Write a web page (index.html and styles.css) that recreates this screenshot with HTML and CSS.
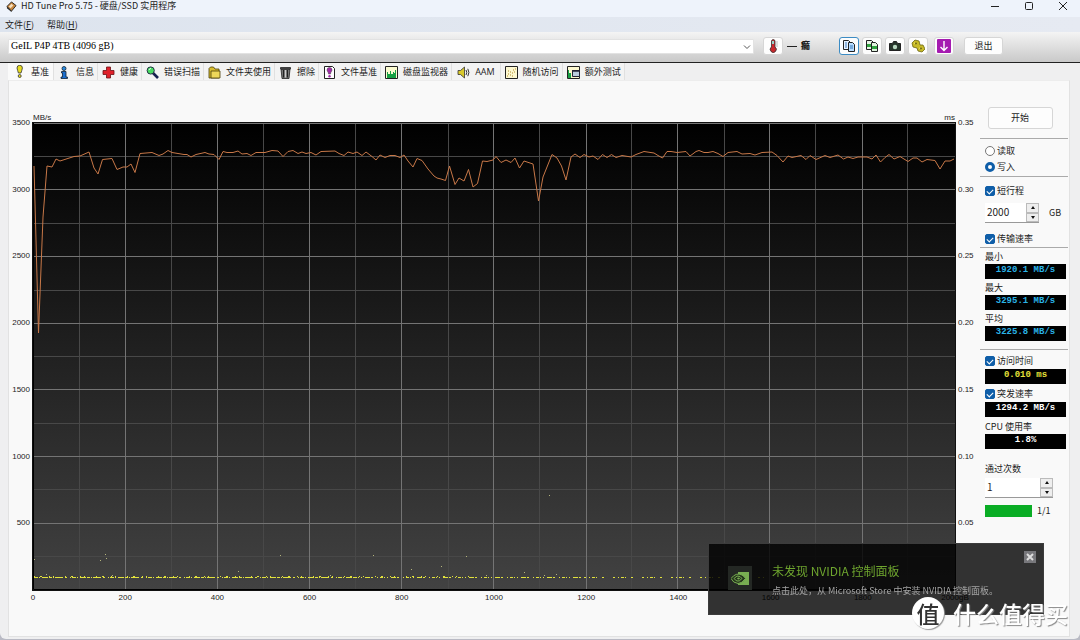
FILE: index.html
```html
<!DOCTYPE html>
<html lang="zh-CN">
<head>
<meta charset="utf-8">
<title>HD Tune Pro 5.75</title>
<link rel="stylesheet" href="styles.css">
</head>
<body>
<div class="window">
  <header class="titlebar">
    <svg class="app-icon" viewBox="0 0 12 12"><path d="M1 6 6 1l5 4-5 6z" fill="#c8863c" stroke="#222"/><path d="m3 6 3-3 2 2-3 3z" fill="#f4dfc0"/><path d="m1 6 5 5v1L1 8z" fill="#222"/></svg>
    <h1>HD Tune Pro 5.75 - 硬盘/SSD 实用程序</h1>
    <div class="window-controls">
      <button type="button" aria-label="最小化"><svg viewBox="0 0 10 10"><path d="M1 5.5h8"/></svg></button>
      <button type="button" aria-label="最大化"><svg viewBox="0 0 10 10"><rect x="1.5" y="1.5" width="7" height="7" rx="1"/></svg></button>
      <button type="button" aria-label="关闭"><svg viewBox="0 0 10 10"><path d="m1 1 8 8M9 1 1 9"/></svg></button>
    </div>
  </header>

  <nav class="menubar">
    <button type="button">文件(<u>F</u>)</button>
    <button type="button">帮助(<u>H</u>)</button>
  </nav>

  <div class="toolbar">
    <div class="drive">
      <select aria-label="硬盘"><option>GeIL P4P 4TB (4096 gB)</option></select>
      <svg viewBox="0 0 8 8"><path d="m1 2.500 3 3 3-3" fill="none" stroke="#555"/></svg>
    </div>
    <div class="temperature">
      <button type="button" class="tool" aria-label="温度"><svg viewBox="0 0 14 14"><path d="M5.500 2a1.800 1.800 0 0 1 3.500 0v6a3 3 0 1 1-3.500 0z" fill="#c9282d" stroke="#333" stroke-width=".8"/><path d="M6 2h2v3H6z" fill="#9bd2c8"/><path d="M10 3h2M10 5h2M10 7h2" stroke="#999" stroke-width=".6"/></svg></button>
      <span class="dash"></span><b>癤</b>
    </div>
    <div class="actions">
      <button type="button" class="tool focused" aria-label="复制文本"><svg viewBox="0 0 14 14"><path d="M1.500 1.500h5l2 2v7h-7z" fill="#e8f2ff" stroke="#222"/><path d="M6.500 3.500h4l2 2v7h-6z" fill="#b7dcff" stroke="#222"/><path d="M3 4h2M3 6h2M3 8h2M8 7h3M8 9h3" stroke="#3b78b8"/></svg></button>
      <button type="button" class="tool" aria-label="复制截图"><svg viewBox="0 0 14 14"><path d="M1.500 1.500h5l2 2v7h-7z" fill="#e9f4e6" stroke="#222"/><path d="M6.500 3.500h4l2 2v7h-6z" fill="#dff2dd" stroke="#222"/><path d="M2 5h4v3H2zM7 7h5v3H7z" fill="#31a33f"/></svg></button>
      <button type="button" class="tool" aria-label="保存截图"><svg viewBox="0 0 14 14"><path d="M1.500 4.500h3l1-2h3l1 2h3v7h-11z" fill="#26352b" stroke="#222"/><circle cx="7" cy="8" r="2.200" fill="#b8d8c0"/></svg></button>
      <button type="button" class="tool" aria-label="选项"><svg viewBox="0 0 14 14"><path d="m1 4 3-3 4 1 1 4 3 0 2 4-3 3-4-1-1-3-4-1z" fill="#c8bb28" stroke="#6b6410" stroke-width=".8"/><path d="m3 4 3 1M8 9l3 1" stroke="#f0e870"/><circle cx="5" cy="4.500" r="1" fill="#6b6410"/><circle cx="10" cy="9.500" r="1" fill="#6b6410"/></svg></button>
      <button type="button" class="tool save" aria-label="保存"><svg viewBox="0 0 14 14"><rect width="14" height="14" rx="1" fill="#a51bb0"/><path d="M7 2v9M3.500 8 7 11.500 10.500 8" fill="none" stroke="#fff" stroke-width="1.400"/></svg></button>
      <button type="button" class="exit">退出</button>
    </div>
  </div>

  <nav class="tabs">
    <button type="button" class="tab active"><svg viewBox="0 0 13 13"><path d="M4 3a2.700 2.700 0 0 1 5.400 0c0 2-1.200 3-1.400 5H5.400C5.200 6 4 5 4 3z" fill="#e8dc20" stroke="#333" stroke-width=".8"/><circle cx="6.700" cy="11" r="1.500" fill="#e8dc20" stroke="#333" stroke-width=".8"/></svg>基准</button>
    <button type="button" class="tab"><svg viewBox="0 0 13 13"><circle cx="6" cy="2.500" r="2" fill="#2a8be0" stroke="#123" stroke-width=".8"/><path d="M3.500 5.500h4.500V11h1.500v1.500H3V11h1.500V7h-1z" fill="#1c6fd0" stroke="#123" stroke-width=".8"/></svg>信息</button>
    <button type="button" class="tab"><svg viewBox="0 0 13 13"><path d="M4.500 1h4v3.500H12v4H8.500V12h-4V8.500H1v-4h3.500z" fill="#e0202a" stroke="#6a1014" stroke-width=".8"/></svg>健康</button>
    <button type="button" class="tab"><svg viewBox="0 0 13 13"><path d="m7 7 5 5" stroke="#14204f" stroke-width="2.600"/><circle cx="4.700" cy="4.500" r="3.600" fill="#48dc62" stroke="#234"/><path d="M3 4a2 2 0 0 1 2-1.500" stroke="#dfe" fill="none"/></svg>错误扫描</button>
    <button type="button" class="tab"><svg viewBox="0 0 13 13"><path d="M1 2.500 2.500 1h3L7 3h4v9H1z" fill="#d8bd30" stroke="#4a3d08" stroke-width=".8"/><path d="M3 5h9v7H3z" fill="#edd75a" stroke="#4a3d08" stroke-width=".8"/></svg>文件夹使用</button>
    <button type="button" class="tab"><svg viewBox="0 0 13 13"><path d="M2 3h9l-1 9.500H3zM1.500 1.500h10V3h-10z" fill="#777" stroke="#222" stroke-width=".8"/><path d="M4.500 4v7.500M8.500 4v7.500" stroke="#222"/><path d="M6.500 4v7.500" stroke="#ccc"/></svg>擦除</button>
    <button type="button" class="tab"><svg viewBox="0 0 13 13"><path d="M1.500.5h8l2 2v10h-10z" fill="#fff" stroke="#222"/><path d="M4 4a2.500 2.500 0 0 1 5 0c0 1.500-1.500 2-1.500 4h-2c0-2-1.500-2.500-1.500-4z" fill="#a02aa8" stroke="#444" stroke-width=".5"/><circle cx="6.500" cy="10.200" r="1.200" fill="#a02aa8"/></svg>文件基准</button>
    <button type="button" class="tab"><svg viewBox="0 0 13 13"><path d="M.5.5h12v12H.5z" fill="#fbfbd0" stroke="#222"/><path d="M2 12V6h1v2h2V5h1v3h2V6h1v1h1V4h1v8z" fill="#17a044"/></svg>磁盘监视器</button>
    <button type="button" class="tab sound"><svg viewBox="0 0 13 13"><path d="M1 4.500h2.500L7.500 1v11l-4-3.500H1z" fill="#d9c92c" stroke="#333" stroke-width=".8"/><path d="M9 4q1.500 2.500 0 5M10.800 2.800q2.200 3.700 0 7.400" fill="none" stroke="#333"/></svg>AAM</button>
    <button type="button" class="tab"><svg viewBox="0 0 13 13"><path d="M.5.5h12v12H.5z" fill="#fdf8d0" stroke="#222"/><path d="M2 10h1M3 8h1M5 9h1M5 6h1M7 7h1M8 4h1M9 6h1M10 3h1M7 10h1M3 5h1" stroke="#b08a28"/></svg>随机访问</button>
    <button type="button" class="tab"><svg viewBox="0 0 13 13"><path d="M.5.5h12v12H.5z" fill="#fdf8d0" stroke="#222"/><path d="M1 12V4h1v3h2v5z" fill="#17a044"/><path d="M5.500 4.500h7v6h-7z" fill="#bcd" stroke="#223"/><path d="M5 5h8" stroke="#223" stroke-width="1.500"/></svg>额外测试</button>
  </nav>

  <main class="panel">
    <section class="chart">
      <div class="units"><span>MB/s</span><span>ms</span></div>
      <div class="axis-left"><span>3500</span><span>3000</span><span>2500</span><span>2000</span><span>1500</span><span>1000</span><span>500</span></div>
      <svg class="plot" viewBox="33 123 922 467" preserveAspectRatio="none">
        <defs>
          <linearGradient id="shade" x1="0" y1="0" x2="0" y2="1"><stop offset="0" stop-color="#000"/><stop offset="1" stop-color="#424242"/></linearGradient>
        </defs>
        <rect x="33" y="123" width="922" height="467" fill="url(#shade)"/>
        <path class="grid minor" d="M79.500 123v467M171.500 123v467M263.500 123v467M355.500 123v467M448.500 123v467M539.500 123v467M631.500 123v467M724.500 123v467M815.500 123v467M907.500 123v467M33 156.500h922M33 223.500h922M33 290.500h922M33 356.500h922M33 423.500h922M33 489.500h922M33 556.500h922"/>
        <path class="grid major" d="M125.500 123v467M217.500 123v467M309.500 123v467M401.500 123v467M493.500 123v467M586.500 123v467M677.500 123v467M769.500 123v467M862.500 123v467M33 123.500h922M33 189.500h922M33 256.500h922M33 323.500h922M33 389.500h922M33 456.500h922M33 523.500h922"/>
        <path class="frame" d="M33.500 123v466.500h921"/>
        <path class="access a" d="M34 577.500h320"/>
        <path class="access b" d="M34 576.500h440"/>
        <path class="access c" d="M354 577.500h230"/>
        <path class="access d" d="M584 577.500h180"/>
        <path class="outliers" d="M34 559.500h1M46 574.500h1M100 560.500h1M105 554.500h1M106 558.500h1M112 575.500h1M238 571.500h1M280 555.500h1M330 575.500h1M373 555.500h1M411 569.500h1M441 566.500h1M466 556.500h1M486 575.500h1M524 572.500h1M549 495.500h1M544 575.500h1M556 574.500h1"/>
        <polyline class="transfer" points="34,166 36,240 38.500,333 43,217 47,166 52,167 56,159 60,161 74,156.500 80,156 89,152 94,168 98,174 102.500,159.500 112,158.500 117,169.500 123,167 127,167 131,164 135,172.500 140,153.500 146,153 152,152.500 159,155.500 163,154 168,150.500 172,152.500 184,154.500 187,154.500 191,157 196,154.500 205,152.500 209,154 214,154.500 219,159.500 223,151.500 227,152.500 233,152.500 238,151 242,154 247,153.500 251,155.500 256,152.500 265,152.500 272,150.500 278,151 283,156.500 288,151.500 293,150.500 298,153.500 302,152 306,153.500 311,152.500 316,155 321,151.500 335,151 339,153.500 344,155.500 348,152 353,153.500 357,152 362,155.500 366,152 372,156.500 376,160 380,155 385,157.500 390,155.500 395,155.500 400,157.500 404,155 408,161 413,167 417,158.500 422,160.500 428,169 434,176 437,178 441,179 445.500,180.500 449.500,166 455,184.500 459,178 464,181 468.500,169.500 473,187 477.500,183.500 482.500,161 487,161.500 493,160 496,156.500 501,162.500 506,160 511,162.500 515,158 519.500,168 524,161 533,164 538.500,201 543,177 549,162 552,154.500 557,158 561.500,166 566,180 571,157 575,154 580,157.500 584,154.500 589,157 593,156 598,159.500 602.500,154.500 607,157.500 611.500,154.500 616,157.500 622,155.500 631,157 636,154.500 644,151.500 654,153 658,155.500 662.500,158 667,151.500 671,151.500 677,152.500 686,151.500 690,156 696,151.500 699,150.500 704,152.500 708,152.500 713,151.500 718,153.500 723,156.500 728,152.500 737,151.500 742,154 750,153.500 755,155 762,152.500 772,152 777,155.500 783,162 788,156 792,157.500 801,155.500 806,159.500 810,155.500 816,159.500 825,155.500 830,157.500 838,155 843.500,159 848,157 853,158.500 858,157 867,157 872,159 876,155 880.500,162 885,157.500 889,154.500 894,159 900,156.500 908,161.500 913,158 917,158 922,162 927,159.500 935,160.500 940,169 945,161 950,161 954,159"/>
      </svg>
      <div class="axis-right"><span>0.35</span><span>0.30</span><span>0.25</span><span>0.20</span><span>0.15</span><span>0.10</span><span>0.05</span></div>
      <div class="axis-bottom"><span>0</span><span>200</span><span>400</span><span>600</span><span>800</span><span>1000</span><span>1200</span><span>1400</span><span>1600</span><span>1800</span><span>2000gB</span></div>
    </section>

    <aside class="side">
      <button type="button" class="start">开始</button>
      <div class="modes">
        <label class="option"><input type="radio" name="mode">读取</label>
        <label class="option"><input type="radio" name="mode" checked>写入</label>
      </div>
      <label class="option stroke"><input type="checkbox" checked>短行程</label>
      <div class="spin-row">
        <div class="spin"><input type="text" value="2000" aria-label="短行程容量"><span class="arrows"><button type="button" aria-label="增加"></button><button type="button" aria-label="减少"></button></span></div>
        <span>GB</span>
      </div>
      <label class="option rate"><input type="checkbox" checked>传输速率</label>
      <div class="readings">
        <span class="caption">最小</span><output class="lcd">1920.1 MB/s</output>
        <span class="caption">最大</span><output class="lcd">3295.1 MB/s</output>
        <span class="caption">平均</span><output class="lcd">3225.8 MB/s</output>
      </div>
      <div class="extra">
        <label class="option"><input type="checkbox" checked>访问时间</label><output class="lcd yellow">0.010 ms</output>
        <label class="option"><input type="checkbox" checked>突发速率</label><output class="lcd white">1294.2 MB/s</output>
        <span class="caption">CPU 使用率</span><output class="lcd white">1.8%</output>
      </div>
      <label class="caption passes" for="passes">通过次数</label>
      <div class="spin wide"><input type="text" id="passes" value="1"><span class="arrows"><button type="button" aria-label="增加次数"></button><button type="button" aria-label="减少次数"></button></span></div>
      <div class="progress"><span class="bar"></span><span>1/1</span></div>
    </aside>
  </main>
</div>

<div class="toast" role="status">
  <span class="nvidia"><svg viewBox="0 0 18 13"><path d="M7 0h11v13H7z" fill="#78ad52"/><path d="M0 6.500Q5 0 11 3q3 2 3.500 3.500Q11 11.500 7 11.500 2 11 0 6.500z" fill="#25351c" stroke="#78ad52"/><path d="M3 6.500Q6 2.500 9 4.500l2 2Q8 10 6 9 4 8 3 6.500z" fill="none" stroke="#78ad52"/><path d="M6 6.500q1.500-2 3 0-1.500 2-3 0z" fill="#78ad52"/></svg></span>
  <div class="message">
    <strong>未发现 NVIDIA 控制面板</strong>
    <p>点击此处，从 Microsoft Store 中安装 NVIDIA 控制面板。</p>
  </div>
  <button type="button" class="dismiss" aria-label="关闭通知"><svg viewBox="0 0 8 8"><path d="m1 1 6 6M7 1 1 7" stroke="#ddd" stroke-width="2"/></svg></button>
</div>

<div class="watermark"><span class="seal">值</span><span>什么值得买</span></div>
</body>
</html>
```

FILE: styles.css
```css
* { box-sizing: border-box; }

body {
  margin: 0;
  background: #b9bac4;
  color: #1c1c1c;
  font: 9px/14px "Noto Sans CJK SC", "Noto Sans", sans-serif;
}

button, input, select { font: inherit; color: inherit; margin: 0; }
button { padding: 0; border: 0; background: none; }
svg { display: block; }

.window {
  display: flex;
  flex-direction: column;
  min-height: calc(100vh - 2px);
  background: #efeff0;
  border-radius: 0 0 6px 6px;
  padding-bottom: 2px;
}

.titlebar {
  display: flex;
  align-items: center;
  height: 17px;
  padding: 0 12px 5px 6px;
  background: #eef3fb;
}
.titlebar h1 { flex: 1; margin: 0 0 0 4px; font-size: 9px; font-weight: 400; }
.app-icon { width: 11px; height: 11px; }
.window-controls { display: flex; gap: 24px; }
.window-controls svg { width: 10px; height: 10px; fill: none; stroke: #222; }

.menubar {
  display: flex;
  gap: 13px;
  height: 15px;
  padding: 0 5px;
  background: linear-gradient(90deg, #dde4ee, #e6eaf2);
}

.toolbar {
  display: flex;
  align-items: center;
  height: 31px;
  padding: 0 77px 2px 8px;
  background: linear-gradient(#f4f4f4, #c9c9c9);
  border-bottom: 1px solid #222;
}
.drive { position: relative; flex: 1; margin-right: 9px; }
.drive select {
  display: block;
  width: 100%;
  height: 15px;
  padding: 0 2px;
  border: 1px solid #e2e2e2;
  border-radius: 1px;
  background: #fff;
  color: #000;
  font-family: "Liberation Serif", serif;
  font-size: 10px;
  line-height: 12px;
  appearance: none;
}
.drive svg { position: absolute; right: 3px; top: 4px; width: 8px; height: 8px; pointer-events: none; }

.tool, .exit, .start {
  background: #fdfdfd;
  border: 1px solid #d6d6d6;
  border-radius: 3px;
}
.tool { display: grid; place-items: center; width: 20px; height: 18px; }
.tool svg { width: 14px; height: 14px; }
.tool.focused { border-color: #3c8cc4; }
.tool.save { margin: 0 7px 0 3px; }
.exit { width: 39px; height: 18px; }
.temperature { display: flex; align-items: center; gap: 4px; margin-right: 29px; }
.temperature b { font-weight: 900; }
.dash { width: 10px; height: 1px; background: #222; }
.actions { display: flex; gap: 3px; }

.tabs { display: flex; height: 17px; padding-left: 8px; }
.tab {
  display: flex;
  align-items: center;
  gap: 5px;
  padding: 1px 3px 0 4px;
  border: solid #e0e0e0;
  border-width: 0 1px 0 0;
  background: #f3f3f3;
}
.tab svg { width: 13px; height: 13px; }
.tab.active { background: #fafafa; padding: 0 4px 0 5px; }
.tab.sound { font-family: "Open Sans", "Noto Sans", sans-serif; padding: 1px 5px 0; }

.panel {
  flex: 1;
  display: flex;
  margin: 0 10px 0 8px;
  background: #f9f9f9;
  border: 1px solid #e2e2e2;
  border-top-color: #ededed;
}

.chart {
  flex: 1;
  display: grid;
  grid-template-columns: 24px 1fr 25px;
  grid-template-rows: 42px 1fr 46px;
  font: 8px/14px "Liberation Sans", sans-serif;
  min-width: 0;
}
.units {
  grid-column: 2;
  display: flex;
  justify-content: space-between;
  align-items: flex-end;
  line-height: 10px;
}
.axis-left, .axis-right {
  grid-row: 2;
  display: grid;
  grid-template-rows: repeat(7, 1fr);
  margin: -7px 3px 7px;
}
.axis-left { grid-column: 1; text-align: right; }
.axis-right { grid-column: 3; }
.axis-bottom {
  grid-row: 3;
  grid-column: 2;
  display: grid;
  grid-template-columns: repeat(11, 1fr);
  margin: 1px -5%;
  text-align: center;
}
.plot {
  grid-row: 2;
  grid-column: 2;
  width: 100%;
  height: 100%;
  min-height: 0;
  outline: 1px solid #111;
}
.grid { fill: none; }
.minor { stroke: #484848; }
.major { stroke: #747474; }
.frame { fill: none; stroke: #000; }
.transfer { fill: none; stroke: #c87848; }
.access, .outliers { fill: none; stroke: #e2e23c; }
.outliers { stroke: #b4b47c; }
.a { stroke-dasharray: 4 1 1 2 6 1 3 1 1 1 8 2 2 3 1 1; }
.b { stroke-dasharray: 1 5 2 7 1 3 1 11; }
.c { stroke-dasharray: 3 1 1 2 1 3 5 1 2 4 1 2; }
.d { stroke-dasharray: 2 3 1 2 3 1 1 5 2 9; }

.side { display: flex; flex-direction: column; width: 89px; padding: 0 3px 0 5px; line-height: 16px; }
.start { align-self: center; width: 65px; height: 22px; margin-top: 26px; margin-right: 11px; }
.modes, .extra { margin: 9px -2px 0 -5px; padding: 4px 2px 0 5px; border-top: 1px solid #aaa; }
.modes { padding-bottom: 1px; border-bottom: 1px solid #aaa; }
.option { display: flex; align-items: center; gap: 2px; height: 16px; }
.option input {
  display: grid;
  place-items: center;
  width: 10px;
  height: 10px;
  border: 1px solid #0f5ea8;
  border-radius: 2px;
  background: #0f5ea8;
  appearance: none;
}
.option input[type="radio"] { border: 1px solid #777; border-radius: 50%; background: #fff; }
.option input[type="radio"]:checked { border: 3px solid #0f5ea8; }
.option input[type="checkbox"]::before {
  content: "";
  width: 5px;
  height: 3px;
  border: solid #fff;
  border-width: 0 0 1px 1px;
  transform: rotate(-45deg);
}
.stroke { margin-top: 6px; }
.spin-row { display: flex; align-items: center; gap: 10px; margin-top: 4px; }
.spin {
  display: flex;
  width: 54px;
  height: 20px;
  background: #fff;
  border-bottom: 1px solid #999;
}
.spin input { flex: 1; min-width: 0; padding: 0 2px 2px; border: 0; background: none; font-size: 10px; }
.arrows { display: grid; grid-template-rows: 1fr 1fr; width: 13px; }
.arrows button { display: grid; place-items: center; border: 1px solid #bbb; background: #eee; }
.arrows button::before { content: ""; border: solid transparent; border-width: 0 2px 3px; border-bottom-color: #111; }
.arrows button + button::before { transform: rotate(180deg); }
.rate { margin-top: 8px; }
.readings { margin: 0 -2px 0 -5px; padding: 1px 2px 0 5px; border-top: 1px solid #aaa; }
.caption { display: block; height: 15px; line-height: 15px; }
.lcd {
  display: block;
  height: 15px;
  background: #000;
  color: #2ab4e8;
  text-align: center;
  font: bold 9px/12px "Liberation Mono", monospace;
}
.readings .lcd { margin-bottom: 1px; }
.lcd.yellow { color: #e6e03a; }
.lcd.white { color: #fff; }
.extra { margin-top: 7px; padding-top: 3px; }
.extra .lcd { margin-bottom: 2px; }
.passes { margin-top: 10px; }
.spin.wide { width: 68px; margin-top: 2px; }
.progress { display: flex; align-items: center; gap: 5px; margin-top: 5px; }
.bar { width: 47px; height: 12px; background: #0aad25; }

.toast {
  position: fixed;
  right: 36px;
  bottom: 25px;
  display: flex;
  align-items: flex-start;
  width: 336px;
  height: 72px;
  padding: 7px 7px 0 19px;
  background: rgba(0, 0, 0, .8);
  border: 1px solid #3c3c3c;
}
.nvidia { display: grid; place-items: center; width: 24px; height: 24px; margin: 15px 20px 0 0; background: #242824; }
.nvidia svg { width: 18px; height: 13px; }
.message { flex: 1; padding-top: 11px; white-space: nowrap; }
.message strong { display: block; color: #6ea52e; font-size: 12px; font-weight: 400; line-height: 18px; }
.message p { margin: 3px 0 0; color: #a4a4a4; font-size: 9px; line-height: 16px; }
.dismiss { display: grid; place-items: center; width: 12px; height: 12px; background: #77777b; }
.dismiss svg { width: 8px; height: 8px; }

.watermark {
  position: fixed;
  right: 12px;
  bottom: 11px;
  display: flex;
  align-items: center;
  gap: 9px;
  color: #fff;
  font-size: 23px;
  font-weight: 500;
  line-height: 32px;
  text-shadow: 1px 1px 1px #888;
}
.seal {
  width: 32px;
  height: 32px;
  border-radius: 50%;
  background: #fff;
  box-shadow: 1px 1px 1px #999;
  color: #333;
  text-align: center;
  text-shadow: none;
}
```
